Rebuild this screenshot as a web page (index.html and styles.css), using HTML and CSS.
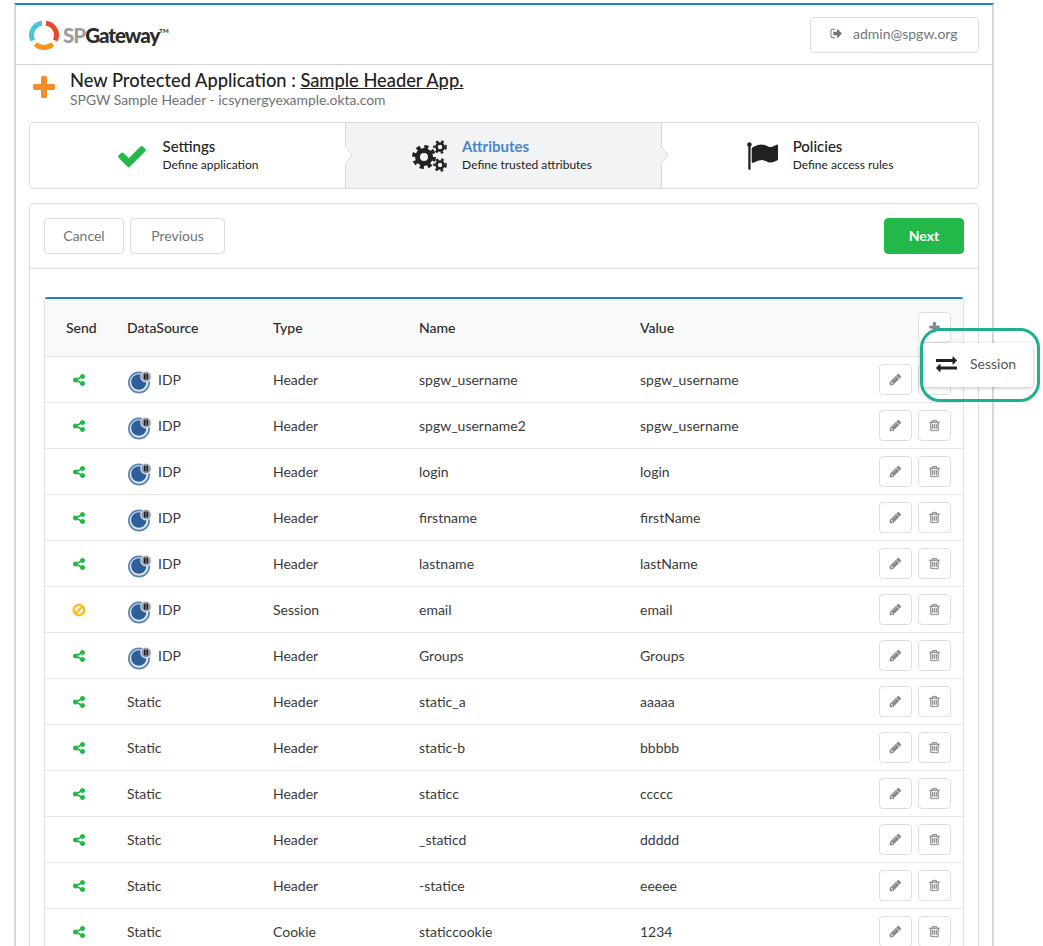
FILE: index.html
```html
<!DOCTYPE html>
<html lang="en">
<head>
    <meta charset="UTF-8">
    <title>SPGateway - New Protected Application</title>
    <link rel="stylesheet" href="styles.css">
</head>
<body>
    <svg class="sprite" xmlns="http://www.w3.org/2000/svg">
        <symbol id="i-check" viewBox="0 0 1792 1792"><path d="M1671 566q0 40-28 68l-724 724-136 136q-28 28-68 28t-68-28l-136-136-362-362q-28-28-28-68t28-68l136-136q28-28 68-28t68 28l294 295 656-657q28-28 68-28t68 28l136 136q28 28 28 68z"/></symbol>
        <symbol id="i-plus" viewBox="0 0 1792 1792"><path d="M1600 736v192q0 40-28 68t-68 28h-416v416q0 40-28 68t-68 28h-192q-40 0-68-28t-28-68v-416h-416q-40 0-68-28t-28-68v-192q0-40 28-68t68-28h416v-416q0-40 28-68t68-28h192q40 0 68 28t28 68v416h416q40 0 68 28t28 68z"/></symbol>
        <symbol id="i-share" viewBox="0 0 1792 1792"><path d="M1344 1024q133 0 226.5 93.5t93.5 226.5-93.5 226.5-226.5 93.5-226.5-93.5-93.5-226.5q0-12 2-34l-360-180q-92 86-218 86-133 0-226.5-93.5t-93.5-226.5 93.5-226.5 226.5-93.5q126 0 218 86l360-180q-2-22-2-34 0-133 93.5-226.5t226.5-93.5 226.5 93.5 93.5 226.5-93.5 226.5-226.5 93.5q-126 0-218-86l-360 180q2 22 2 34t-2 34l360 180q92-86 218-86z"/></symbol>
        <symbol id="i-ban" viewBox="0 0 1792 1792"><path d="M1440 893q0-161-87-295l-754 753q137 89 297 89 111 0 211.5-43.5t173.5-116.5 116-174.5 43-212.5zm-999 299l755-754q-135-91-300-91-148 0-273 73t-198 199-73 274q0 162 89 299zm1223-299q0 157-61 300t-163.5 246-245 164-298.5 61-298.5-61-245-164-163.5-246-61-300 61-299.5 163.5-245.5 245-164 298.5-61 298.5 61 245 164 163.5 245.5 61 299.5z"/></symbol>
        <symbol id="i-pencil" viewBox="0 0 1792 1792"><path d="M491 1536l91-91-235-235-91 91v107h128v128h107zm523-928q0-22-22-22-10 0-17 7l-542 542q-7 7-7 17 0 22 22 22 10 0 17-7l542-542q7-7 7-17zm-54-192l416 416-832 832h-416v-416zm683 96q0 53-37 90l-166 166-416-416 166-165q36-38 90-38 53 0 91 38l235 234q37 39 37 91z"/></symbol>
        <symbol id="i-trash" viewBox="0 0 1792 1792"><path d="M704 736v576q0 14-9 23t-23 9h-64q-14 0-23-9t-9-23v-576q0-14 9-23t23-9h64q14 0 23 9t9 23zm256 0v576q0 14-9 23t-23 9h-64q-14 0-23-9t-9-23v-576q0-14 9-23t23-9h64q14 0 23 9t9 23zm256 0v576q0 14-9 23t-23 9h-64q-14 0-23-9t-9-23v-576q0-14 9-23t23-9h64q14 0 23 9t9 23zm128 724v-948h-896v948q0 22 7 40.5t14.5 27 10.5 8.5h832q3 0 10.5-8.5t14.5-27 7-40.5zm-672-1076h448l-48-117q-7-9-17-11h-317q-10 2-17 11zm928 32v64q0 14-9 23t-23 9h-96v948q0 83-47 143.5t-113 60.5h-832q-66 0-113-58.5t-47-141.5v-952h-96q-14 0-23-9t-9-23v-64q0-14 9-23t23-9h309l70-167q15-37 54-63t79-26h320q40 0 79 26t54 63l70 167h309q14 0 23 9t9 23z"/></symbol>
        <symbol id="i-signout" viewBox="0 0 1792 1792"><path d="M704 1440q0 4 1 20t.5 26.5-3 23.5-10 19.5-20.5 6.5h-320q-119 0-203.5-84.5t-84.5-203.5v-704q0-119 84.5-203.5t203.5-84.5h320q13 0 22.5 9.5t9.5 22.5q0 4 1 20t.5 26.5-3 23.5-10 19.5-20.5 6.5h-320q-66 0-113 47t-47 113v704q0 66 47 113t113 47h312l11.5 1 11.5 3 8 5.5 7 9 2 13.5zm928-544q0 26-19 45l-544 544q-19 19-45 19t-45-19-19-45v-288h-448q-26 0-45-19t-19-45v-384q0-26 19-45t45-19h448v-288q0-26 19-45t45-19 45 19l544 544q19 19 19 45z"/></symbol>
        <symbol id="i-flag" viewBox="0 0 1792 1792"><path d="M320 256q0 72-64 110v1266q0 13-9.500 22.500t-22.500 9.500h-64q-13 0-22.500-9.500t-9.500-22.500v-1266q-64-38-64-110 0-53 37.500-90.500t90.500-37.500 90.500 37.500 37.500 90.500zm1472 64v763q0 25-12.500 38.500t-39.500 27.500q-215 116-369 116-61 0-123.500-22t-108.500-48-115.500-48-142.500-22q-192 0-464 146-17 9-33 9-26 0-45-19t-19-45v-742q0-32 31-55 21-14 79-43 236-120 421-120 107 0 200 29t219 88q38 19 88 19 54 0 117.500-21t110-47 88-47 54.500-21q26 0 45 19t19 45z"/></symbol>
        <symbol id="i-exchange" viewBox="0 0 1792 1792"><path d="M1792 1184v192q0 13-9.500 22.500t-22.500 9.500h-1376v192q0 13-9.500 22.500t-22.500 9.500q-12 0-24-10l-319-320q-9-9-9-22 0-14 9-23l320-320q9-9 23-9 13 0 22.500 9.500t9.500 22.500v192h1376q13 0 22.500 9.500t9.500 22.500zm0-544q0 14-9 23l-320 320q-9 9-23 9-13 0-22.500-9.500t-9.500-22.500v-192h-1376q-13 0-22.500-9.500t-9.500-22.500v-192q0-13 9.500-22.500t22.500-9.500h1376v-192q0-14 9-23t23-9q12 0 24 10l319 319q9 9 9 23z"/></symbol>
        <symbol id="i-idp" viewBox="0 0 24 24">
            <circle cx="11" cy="11.500" r="11" fill="#5b85b8"/>
            <circle cx="11" cy="11.500" r="9.300" fill="#e4e9f1"/>
            <circle cx="10.800" cy="11" r="7.700" fill="#2f5f9b"/>
            <circle cx="18" cy="5.700" r="5.700" fill="#e4e6ea"/>
            <circle cx="18" cy="5.700" r="4.600" fill="#8f939b"/>
            <rect x="16" y="2.800" width="1.500" height="5.600" fill="#1d1d1d"/>
            <rect x="18.500" y="2.800" width="1.500" height="5.600" fill="#1d1d1d"/>
        </symbol>
    </svg>

    <div class="shell">
        <header class="topbar">
            <a class="logo" href="#">
                <svg class="logo-ring" viewBox="0 0 30 30" width="30" height="30">
                    <path d="M3.800 20.500A12 12 0 0 1 13 3.200" fill="none" stroke="#4fc3d9" stroke-width="5"/>
                    <path d="M17 3.200A12 12 0 0 1 26.200 20.500" fill="none" stroke="#e8482c" stroke-width="5"/>
                    <path d="M23.500 24A12 12 0 0 1 6.500 24" fill="none" stroke="#f7931e" stroke-width="5"/>
                </svg>
                <span class="logo-text"><span class="logo-sp">SP</span>Gateway<sup>TM</sup></span>
            </a>
            <button class="user-btn"><svg class="ico"><use href="#i-signout"/></svg>admin@spgw.org</button>
        </header>

        <div class="page-title">
            <svg class="title-plus"><use href="#i-plus"/></svg>
            <div>
                <h1>New Protected Application : <a href="#">Sample Header App.</a></h1>
                <p>SPGW Sample Header - icsynergyexample.okta.com</p>
            </div>
        </div>

        <div class="steps">
            <div class="step">
                <svg class="step-ico check"><use href="#i-check"/></svg>
                <div class="step-text"><h3>Settings</h3><p>Define application</p></div>
            </div>
            <div class="step active">
                <svg class="step-ico cogs" viewBox="0 0 36 32">
                    <g fill="none" stroke="#222">
                        <circle cx="13" cy="17" r="6.500" stroke-width="5"/>
                        <circle cx="13" cy="17" r="10" stroke-width="4" stroke-dasharray="4 3.850"/>
                        <circle cx="29" cy="7" r="3.500" stroke-width="2.600"/>
                        <circle cx="29" cy="7" r="5.600" stroke-width="2.400" stroke-dasharray="2.500 2.900"/>
                        <circle cx="29" cy="25" r="3.500" stroke-width="2.600"/>
                        <circle cx="29" cy="25" r="5.600" stroke-width="2.400" stroke-dasharray="2.500 2.900"/>
                    </g>
                </svg>
                <div class="step-text"><h3>Attributes</h3><p>Define trusted attributes</p></div>
            </div>
            <div class="step">
                <svg class="step-ico flag"><use href="#i-flag"/></svg>
                <div class="step-text"><h3>Policies</h3><p>Define access rules</p></div>
            </div>
        </div>

        <div class="card">
            <div class="toolbar">
                <button class="btn btn-cancel">Cancel</button>
                <button class="btn btn-prev">Previous</button>
                <button class="btn btn-next">Next</button>
            </div>
            <div class="card-body">
                <table class="attr-table">
                    <thead>
                        <tr>
                            <th class="col-send">Send</th>
                            <th class="col-source">DataSource</th>
                            <th class="col-type">Type</th>
                            <th class="col-name">Name</th>
                            <th>Value</th>
                            <th class="col-actions"><button class="icon-btn"><svg><use href="#i-plus"/></svg></button></th>
                        </tr>
                    </thead>
                    <tbody>
                        <tr>
                            <td><svg class="send"><use href="#i-share"/></svg></td>
                            <td><svg class="idp"><use href="#i-idp"/></svg>IDP</td>
                            <td>Header</td><td>spgw_username</td><td>spgw_username</td>
                            <td class="col-actions"><button class="icon-btn"><svg><use href="#i-pencil"/></svg></button><button class="icon-btn"><svg><use href="#i-trash"/></svg></button></td>
                        </tr>
                        <tr>
                            <td><svg class="send"><use href="#i-share"/></svg></td>
                            <td><svg class="idp"><use href="#i-idp"/></svg>IDP</td>
                            <td>Header</td><td>spgw_username2</td><td>spgw_username</td>
                            <td class="col-actions"><button class="icon-btn"><svg><use href="#i-pencil"/></svg></button><button class="icon-btn"><svg><use href="#i-trash"/></svg></button></td>
                        </tr>
                        <tr>
                            <td><svg class="send"><use href="#i-share"/></svg></td>
                            <td><svg class="idp"><use href="#i-idp"/></svg>IDP</td>
                            <td>Header</td><td>login</td><td>login</td>
                            <td class="col-actions"><button class="icon-btn"><svg><use href="#i-pencil"/></svg></button><button class="icon-btn"><svg><use href="#i-trash"/></svg></button></td>
                        </tr>
                        <tr>
                            <td><svg class="send"><use href="#i-share"/></svg></td>
                            <td><svg class="idp"><use href="#i-idp"/></svg>IDP</td>
                            <td>Header</td><td>firstname</td><td>firstName</td>
                            <td class="col-actions"><button class="icon-btn"><svg><use href="#i-pencil"/></svg></button><button class="icon-btn"><svg><use href="#i-trash"/></svg></button></td>
                        </tr>
                        <tr>
                            <td><svg class="send"><use href="#i-share"/></svg></td>
                            <td><svg class="idp"><use href="#i-idp"/></svg>IDP</td>
                            <td>Header</td><td>lastname</td><td>lastName</td>
                            <td class="col-actions"><button class="icon-btn"><svg><use href="#i-pencil"/></svg></button><button class="icon-btn"><svg><use href="#i-trash"/></svg></button></td>
                        </tr>
                        <tr>
                            <td><svg class="send off"><use href="#i-ban"/></svg></td>
                            <td><svg class="idp"><use href="#i-idp"/></svg>IDP</td>
                            <td>Session</td><td>email</td><td>email</td>
                            <td class="col-actions"><button class="icon-btn"><svg><use href="#i-pencil"/></svg></button><button class="icon-btn"><svg><use href="#i-trash"/></svg></button></td>
                        </tr>
                        <tr>
                            <td><svg class="send"><use href="#i-share"/></svg></td>
                            <td><svg class="idp"><use href="#i-idp"/></svg>IDP</td>
                            <td>Header</td><td>Groups</td><td>Groups</td>
                            <td class="col-actions"><button class="icon-btn"><svg><use href="#i-pencil"/></svg></button><button class="icon-btn"><svg><use href="#i-trash"/></svg></button></td>
                        </tr>
                        <tr>
                            <td><svg class="send"><use href="#i-share"/></svg></td>
                            <td>Static</td>
                            <td>Header</td><td>static_a</td><td>aaaaa</td>
                            <td class="col-actions"><button class="icon-btn"><svg><use href="#i-pencil"/></svg></button><button class="icon-btn"><svg><use href="#i-trash"/></svg></button></td>
                        </tr>
                        <tr>
                            <td><svg class="send"><use href="#i-share"/></svg></td>
                            <td>Static</td>
                            <td>Header</td><td>static-b</td><td>bbbbb</td>
                            <td class="col-actions"><button class="icon-btn"><svg><use href="#i-pencil"/></svg></button><button class="icon-btn"><svg><use href="#i-trash"/></svg></button></td>
                        </tr>
                        <tr>
                            <td><svg class="send"><use href="#i-share"/></svg></td>
                            <td>Static</td>
                            <td>Header</td><td>staticc</td><td>ccccc</td>
                            <td class="col-actions"><button class="icon-btn"><svg><use href="#i-pencil"/></svg></button><button class="icon-btn"><svg><use href="#i-trash"/></svg></button></td>
                        </tr>
                        <tr>
                            <td><svg class="send"><use href="#i-share"/></svg></td>
                            <td>Static</td>
                            <td>Header</td><td>_staticd</td><td>ddddd</td>
                            <td class="col-actions"><button class="icon-btn"><svg><use href="#i-pencil"/></svg></button><button class="icon-btn"><svg><use href="#i-trash"/></svg></button></td>
                        </tr>
                        <tr>
                            <td><svg class="send"><use href="#i-share"/></svg></td>
                            <td>Static</td>
                            <td>Header</td><td>-statice</td><td>eeeee</td>
                            <td class="col-actions"><button class="icon-btn"><svg><use href="#i-pencil"/></svg></button><button class="icon-btn"><svg><use href="#i-trash"/></svg></button></td>
                        </tr>
                        <tr>
                            <td><svg class="send"><use href="#i-share"/></svg></td>
                            <td>Static</td>
                            <td>Cookie</td><td>staticcookie</td><td>1234</td>
                            <td class="col-actions"><button class="icon-btn"><svg><use href="#i-pencil"/></svg></button><button class="icon-btn"><svg><use href="#i-trash"/></svg></button></td>
                        </tr>
                    </tbody>
                </table>
            </div>
        </div>
    </div>

    <div class="dropdown">
        <svg><use href="#i-exchange"/></svg>Session
    </div>
    <div class="highlight"></div>
</body>
</html>
```

FILE: styles.css
```css
html, body {
    height: 100%;
    overflow: hidden;
}

body {
    margin: 0;
    background-color: white;
    font-family: Lato, "Open Sans", sans-serif;
    font-size: 14px;
    color: #3a3a3a;
}

h1, h3, p {
    margin: 0;
}

button {
    font-family: inherit;
    cursor: pointer;
}

.sprite {
    position: absolute;
    width: 0;
    height: 0;
}

.shell {
    box-sizing: border-box;
    width: 980px;
    margin: 3px 0 0 14px;
    border-top: 2px solid #1f80c8;
    border-left: 2px solid #d6d6d6;
    border-right: 2px solid #d6d6d6;
    padding-bottom: 40px;
}

.topbar {
    display: flex;
    justify-content: space-between;
    align-items: center;
    height: 59px;
    padding: 0 13px 0 13px;
    border-bottom: 1px solid #d4d4d4;
}

.logo {
    display: flex;
    align-items: center;
    gap: 4px;
    text-decoration: none;
}

.logo-text {
    font-size: 20.5px;
    font-weight: 900;
    letter-spacing: -1px;
    color: #2b2b2b;
}

.logo-sp {
    color: #9b9b9b;
}

.logo-text sup {
    font-size: 6px;
    letter-spacing: 0;
    vertical-align: 10px;
    line-height: 0;
    font-weight: 700;
}

.user-btn {
    display: flex;
    align-items: center;
    box-sizing: border-box;
    width: 169px;
    height: 36px;
    padding: 0 0 2px 19px;
    background-color: white;
    border: 1px solid #dcdcdc;
    border-radius: 4px;
    font-size: 14px;
    color: #70767c;
}

.user-btn .ico {
    width: 13px;
    height: 13px;
    margin-right: 10px;
    fill: #777;
}

.page-title {
    display: flex;
    align-items: flex-start;
    height: 57px;
    padding: 4px 0 0 14px;
    box-sizing: border-box;
}

.title-plus {
    width: 28px;
    height: 28px;
    margin: 5px 12px 0 0;
    flex: none;
    fill: #f28c2c;
}

.page-title h1 {
    font-size: 18.3px;
    font-weight: 500;
    line-height: 23px;
    color: #222;
}

.page-title h1 a {
    color: #222;
}

.page-title p {
    margin-top: -1px;
    font-size: 13.9px;
    line-height: 17px;
    color: #6d7278;
}

.steps {
    display: grid;
    grid-template-columns: 315px 316px 1fr;
    height: 67px;
    margin: 0 13px;
    border: 1px solid #dcdcdc;
    border-radius: 4px;
    box-sizing: border-box;
}

.step {
    position: relative;
    box-sizing: border-box;
    display: flex;
    align-items: center;
    justify-content: center;
    gap: 15px;
    padding-right: 1px;
    color: #222;
}

.step + .step {
    border-left: 1px solid #d8d8d8;
}

.step.active {
    background-color: #f2f3f5;
    padding-right: 4px;
}

/* little arrow between two steps */
.step:not(:last-child)::after {
    content: "";
    position: absolute;
    z-index: 1;
    top: 25px;
    right: -7px;
    width: 13px;
    height: 13px;
    background-color: white;
    border-top: 1px solid #dcdcdc;
    border-right: 1px solid #dcdcdc;
    transform: scaleX(0.75) rotate(45deg);
}

.step.active::after {
    background-color: #f2f3f5;
}

.step-text {
    padding-bottom: 3px;
}

.step h3 {
    margin-bottom: 1px;
    font-size: 15px;
    font-weight: 500;
    line-height: 20px;
}

.step p {
    font-size: 12px;
    line-height: 16px;
}

.step.active h3 {
    color: #4a86c8;
    font-weight: 700;
}

.step-ico {
    fill: #222;
}

.step-ico.check {
    width: 32px;
    height: 32px;
    fill: #22b84a;
}

.step-ico.cogs {
    width: 36px;
    height: 32px;
}

.step-ico.flag {
    width: 32px;
    height: 32px;
}

.card {
    margin: 14px 13px 0;
    border: 1px solid #dcdcdc;
    border-radius: 4px;
}

.toolbar {
    display: flex;
    gap: 6px;
    padding: 14px 14px;
    border-bottom: 1px solid #dcdcdc;
}

.btn {
    height: 36px;
    padding: 0 0 2px;
    background-color: white;
    border: 1px solid #dcdcdc;
    border-radius: 4px;
    font-size: 14px;
    color: #6f757b;
}

.btn-cancel {
    width: 80px;
}

.btn-prev {
    width: 95px;
}

.btn-next {
    margin-left: auto;
    width: 80px;
    background-color: #22b84a;
    border-color: #22b84a;
    color: white;
    font-weight: 700;
}

.card-body {
    padding: 28px 14px;
}

.attr-table {
    width: 920px;
    table-layout: fixed;
    border-collapse: separate;
    border-spacing: 0;
    border-top: 2px solid #1f80c8;
    border-left: 1px solid #e2e2e2;
    border-right: 1px solid #e2e2e2;
    border-radius: 4px 4px 0 0;
}

.attr-table th {
    height: 57px;
    padding: 0;
    background-color: #f8f9fb;
    border-bottom: 1px solid #e2e2e2;
    text-align: left;
    font-weight: 500;
    color: #2a2a2a;
}

.attr-table td {
    height: 45px;
    padding: 0;
    border-bottom: 1px solid #e6e6e6;
    color: #3a3a3a;
}

.attr-table th:first-child {
    padding-left: 21px;
}

.attr-table td:first-child {
    padding-left: 27px;
}

.attr-table td:first-child,
.attr-table th:first-child {
    box-sizing: border-box;
}

.attr-table th.col-send {
    width: 82px;
}

.col-source,
.col-type {
    width: 146px;
}

.col-name {
    width: 221px;
}

.col-actions {
    width: 85px;
}

.attr-table th.col-actions {
    text-align: right;
    padding-right: 12px;
    vertical-align: top;
    padding-top: 13px;
    box-sizing: border-box;
}

.attr-table td.col-actions {
    text-align: right;
    padding-right: 12px;
    font-size: 0;
}

.send {
    display: block;
    width: 14px;
    height: 14px;
    fill: #22b84a;
}

.send.off {
    fill: #fdb913;
    stroke: #fdb913;
    stroke-width: 90;
}

/* negative margins keep the icon from stretching the line, so IDP lines up with Static */
.idp {
    width: 24px;
    height: 24px;
    margin: -8px 6px -8px 1px;
    vertical-align: -2px;
}

.icon-btn {
    box-sizing: border-box;
    width: 33px;
    height: 31px;
    padding: 0;
    background-color: white;
    border: 1px solid #dedede;
    border-radius: 4px;
    vertical-align: middle;
}

.icon-btn + .icon-btn {
    margin-left: 6px;
}

.icon-btn svg {
    display: block;
    width: 13px;
    height: 13px;
    margin: auto;
    fill: #858585;
    stroke: #858585;
    stroke-width: 30;
}

.dropdown {
    position: absolute;
    top: 343px;
    left: 920px;
    box-sizing: border-box;
    width: 113px;
    height: 44px;
    display: flex;
    align-items: center;
    padding: 0 0 4px 16px;
    background-color: white;
    border-radius: 4px;
    box-shadow: 0 1px 4px rgba(0, 0, 0, 0.25);
    color: #555;
}

.dropdown svg {
    width: 21px;
    height: 21px;
    margin-right: 13px;
    fill: #222;
}

.highlight {
    position: absolute;
    top: 328px;
    left: 920px;
    box-sizing: border-box;
    width: 120px;
    height: 74px;
    border: 3px solid #1fae8f;
    border-radius: 20px;
}
```
